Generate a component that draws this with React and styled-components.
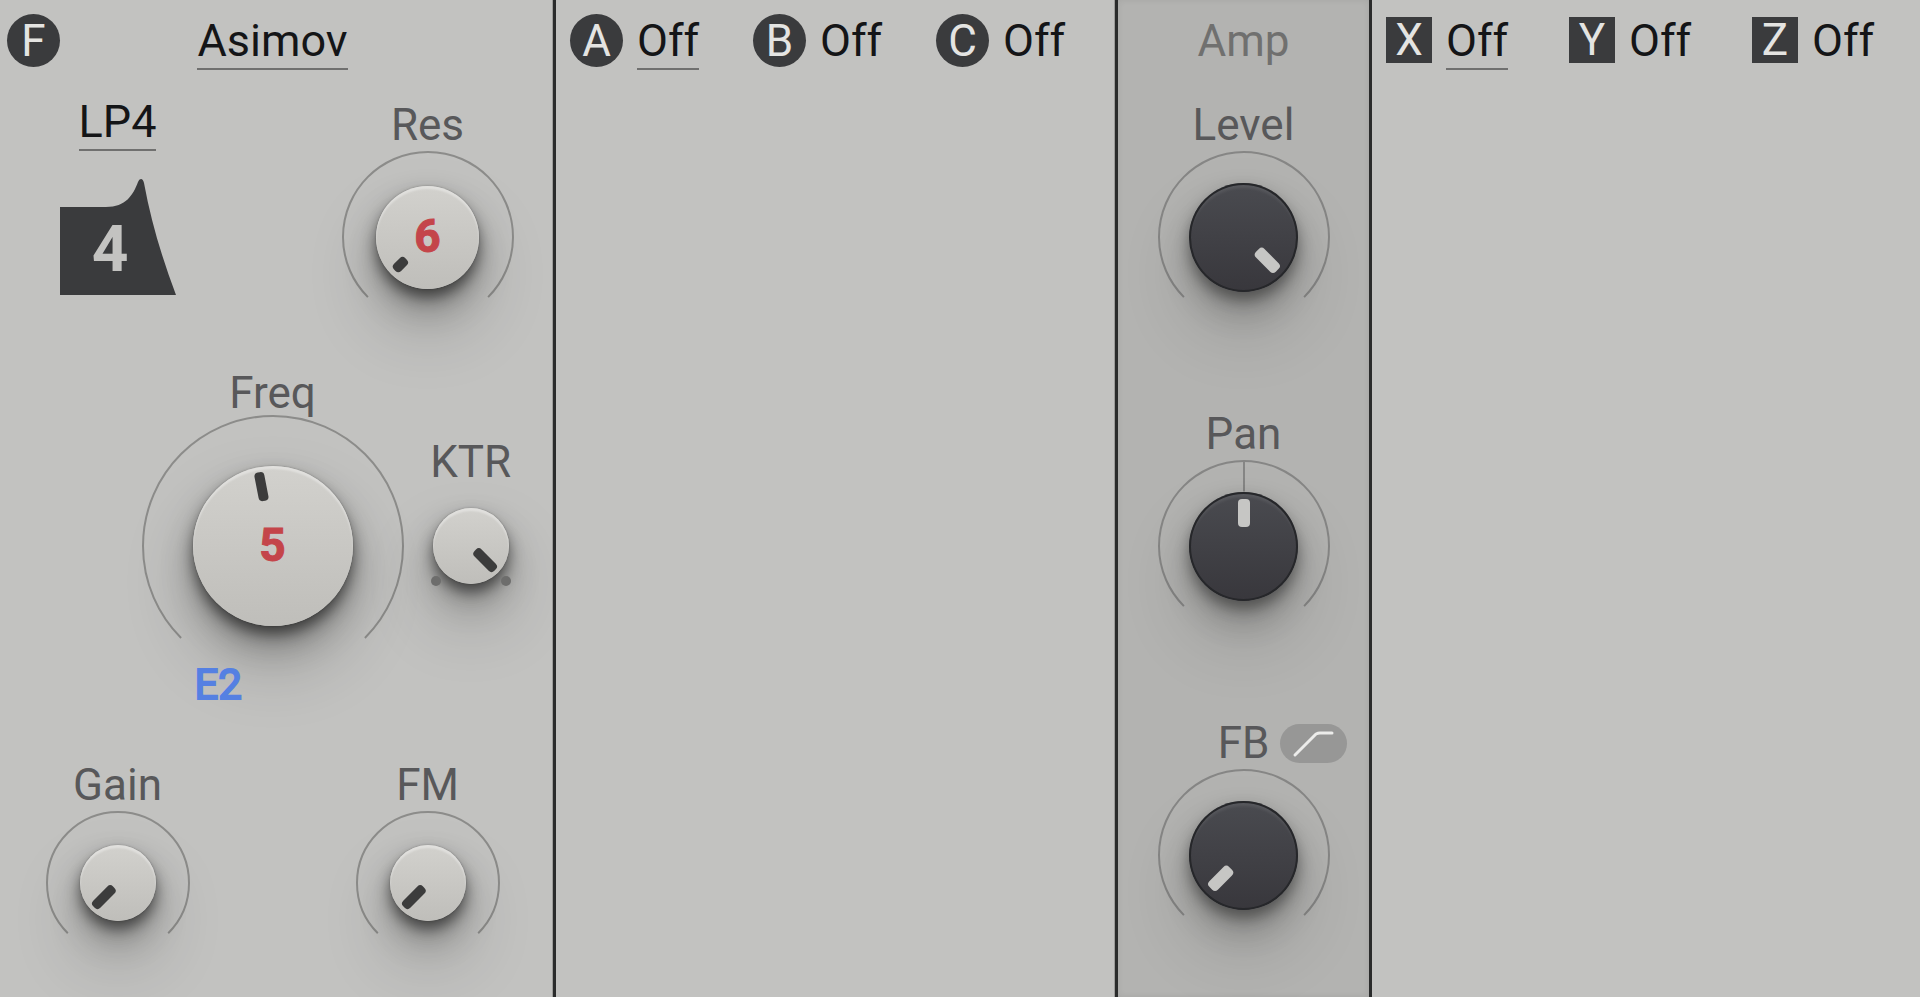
import React, { useId } from "react";
import styled, { createGlobalStyle, css } from "styled-components";

const GlobalStyle = createGlobalStyle`
  *, *::before, *::after { box-sizing: border-box; }
  html, body { margin: 0; background: #c2c2c0; }
  body {
    font-family: Roboto, "Liberation Sans", sans-serif;
    font-size: 44px;
    overflow-x: hidden;
  }
  button { font: inherit; color: inherit; background: none; border: 0; padding: 0; cursor: pointer; }
`;

const Synth = styled.main`
  display: grid;
  grid-template-columns: 556fr 562fr 254fr 548fr;
  min-height: 100vh;
  background: #c2c2c0;
  overflow: hidden;
`;

const Panel = styled.section`
  min-width: 0;
  overflow: hidden;
  padding: 14px 14px 0;
  border-right: 3px solid #2a2b2b;
  box-shadow: inset -1px 0 0 #9c9c9a;
  ${(p) =>
    p.$last &&
    css`
      border-right: 0;
      box-shadow: none;
    `}
  ${(p) => p.$filter && css`padding: 14px 15px 0 7px;`}
  ${(p) =>
    p.$amp &&
    css`
      padding: 14px 0 0;
      background: #b3b3b1;
      box-shadow: inset 0 0 6px rgba(0, 0, 0, 0.08);
    `}
`;

const FilterHeader = styled.header`
  display: grid;
  grid-template-columns: 1fr auto 1fr;
  align-items: start;
`;

const SlotBar = styled.header`
  display: flex;
`;

const Slot = styled.div`
  display: flex;
  flex: none;
  align-items: flex-start;
  gap: 14px;
  width: 183px;
`;

const Badge = styled.span`
  display: flex;
  flex: none;
  align-items: center;
  justify-content: center;
  width: 53px;
  height: 53px;
  border-radius: 50%;
  background: #3a3b3d;
  color: #e4e4e2;
  ${(p) =>
    p.$square &&
    css`
      width: 46px;
      height: 46px;
      margin-top: 3px;
      border-radius: 0;
    `}
`;

const Pick = styled.button`
  && {
    font-size: 45px;
    line-height: 54px;
    color: #141517;
    border-bottom: 2px solid ${(p) => (p.$active ? "#70706f" : "transparent")};
  }
`;

const AmpTitle = styled.h2`
  margin: 0;
  height: 56px;
  font-size: 44px;
  font-weight: 400;
  line-height: 54px;
  text-align: center;
  color: #70706f;
`;

const TopRow = styled.div`
  display: grid;
  grid-template-columns: repeat(3, minmax(0, 1fr));
  padding: 0 33px;
  margin-top: 29px;
`;

const TypePicker = styled.div`
  display: flex;
  flex-direction: column;
  align-items: center;
  gap: 27px;
  margin-top: -4px;
`;

const FreqRow = styled.div`
  display: grid;
  grid-template-columns: 1fr auto 1fr;
  margin-top: 48px;
`;

const BottomRow = styled(TopRow)`
  margin-top: 82px;
`;

const Cell = styled.div`
  display: flex;
  justify-content: center;
  grid-column: ${(p) => p.$col};
  margin-top: ${(p) => p.$drop || 0}px;
`;

const AmpKnobs = styled.div`
  display: flex;
  flex-direction: column;
  gap: 85px;
  margin-top: 29px;
`;

const KnobBox = styled.div`
  display: flex;
  flex-direction: column;
  align-items: center;
`;

const LabelRow = styled.div`
  display: grid;
  grid-template-columns: 1fr auto 1fr;
  align-items: center;
  column-gap: ${(p) => (p.$gap ? 11 : 0)}px;
  align-self: stretch;
`;

const Label = styled.label`
  grid-column: 2;
  line-height: ${(p) => (p.$tight ? 44 : 52)}px;
  color: #58585a;
`;

const Dial = styled.div`
  position: relative;
  display: grid;
  place-items: center;
  width: ${(p) => p.$size}px;
  height: ${(p) => p.$size}px;
  > * { grid-area: 1 / 1; }
`;

const Ring = styled.svg`
  display: block;
  overflow: visible;
  fill: none;
  stroke: ${(p) => (p.$dark ? "#868685" : "#8c8c8a")};
  stroke-width: 2;
`;

const Cap = styled.div`
  display: grid;
  place-items: center;
  width: ${(p) => p.$size}px;
  height: ${(p) => p.$size}px;
  border-radius: 50%;
  background: linear-gradient(#d2d1cd, #bfbeba);
  box-shadow:
    inset 0 3px 2px rgba(255, 255, 255, 0.35),
    0 0 2px rgba(0, 0, 0, 0.3),
    0 8px 14px rgba(0, 0, 0, 0.5),
    0 18px 32px rgba(0, 0, 0, 0.26),
    0 36px 70px rgba(0, 0, 0, 0.22);
  ${(p) =>
    p.$dark &&
    css`
      background: linear-gradient(#4a4b50, #38373c);
      box-shadow:
        inset 0 0 0 2px #26272a,
        inset 0 5px 3px rgba(255, 255, 255, 0.08),
        0 8px 14px rgba(0, 0, 0, 0.36),
        0 18px 32px rgba(0, 0, 0, 0.2),
        0 36px 70px rgba(0, 0, 0, 0.18);
    `}
`;

const Needle = styled.svg`
  display: block;
  overflow: visible;
  z-index: 1;
  fill: ${(p) => (p.$dark ? "#c6c6c4" : "#3c3c3c")};
`;

const Voice = styled.span`
  padding-bottom: 3px;
  font-size: 46px;
  font-weight: 700;
  line-height: 52px;
  color: #c4454a;
  -webkit-text-stroke: 1px #c4454a;
`;

const Range = styled.input`
  position: absolute;
  inset: 0;
  width: 100%;
  height: 100%;
  margin: 0;
  opacity: 0;
  cursor: grab;
  z-index: 2;
`;

const Note = styled.output`
  position: absolute;
  left: 53px;
  bottom: -34px;
  font-size: 42px;
  line-height: 52px;
  color: #5580e2;
  -webkit-text-stroke: 2px #5580e2;
`;

const Pill = styled.button`
  && {
    width: 67px;
    height: 39px;
    border-radius: 20px;
    background: #979796;
  }
  svg { display: block; }
`;

function Knob({ label, cap, size, angle, needle, dark, dots, center, tight, voice, note, extra }) {
  const id = useId();
  const c = size / 2;
  const r = c - 1;
  const d = Math.SQRT1_2 * r;
  const w = dark ? 12 : 10;
  const [from, to] = needle;
  return (
    <KnobBox>
      <LabelRow $gap={Boolean(extra)}>
        <Label htmlFor={id} $tight={tight}>{label}</Label>
        {extra}
      </LabelRow>
      <Dial $size={size}>
        <Ring width={size} height={size} $dark={dark}>
          {!dots && <path d={`M${c - d} ${c + d}A${r} ${r} 0 1 1 ${c + d} ${c + d}`} />}
          {center && <path d={`M${c} 1V${c - cap / 2}`} />}
        </Ring>
        <Cap $size={cap} $dark={dark}>{voice && <Voice>{voice}</Voice>}</Cap>
        <Needle width={size} height={size} $dark={dark}>
          <rect
            x={c - w / 2}
            y={c - to}
            width={w}
            height={to - from}
            rx="4"
            transform={`rotate(${angle} ${c} ${c})`}
          />
          {dots && (
            <g fill="#6d6d6c">
              <circle cx={c - 35} cy={c + 35} r="5" />
              <circle cx={c + 35} cy={c + 35} r="5" />
            </g>
          )}
        </Needle>
        <Range id={id} type="range" min="-135" max="135" defaultValue={Math.round(angle)} />
        {note && <Note htmlFor={id}>{note}</Note>}
      </Dial>
    </KnobBox>
  );
}

function LowpassLogo() {
  return (
    <svg width="116" height="117" viewBox="0 0 116 117" aria-hidden="true">
      <path
        fill="#3a3b3d"
        d="M0 117V29H46C66 29 73 17 78 4Q79 1 81 1Q83 1 84 5C91 43 102 80 116 117Z"
      />
      <text x="50" y="93" textAnchor="middle" fontSize="64" fontWeight="700" fill="#c3c3c1">4</text>
    </svg>
  );
}

function Slots({ names, square }) {
  return (
    <SlotBar>
      {names.map((n, i) => (
        <Slot key={n}>
          <Badge $square={square}>{n}</Badge>
          <Pick type="button" $active={i === 0}>Off</Pick>
        </Slot>
      ))}
    </SlotBar>
  );
}

export default function App() {
  return (
    <>
      <GlobalStyle />
      <Synth>
        <Panel $filter>
          <FilterHeader>
            <Badge>F</Badge>
            <Pick type="button" $active>Asimov</Pick>
          </FilterHeader>
          <TopRow>
            <TypePicker>
              <Pick type="button" $active>LP4</Pick>
              <LowpassLogo />
            </TypePicker>
            <Cell $col={3}>
              <Knob label="Res" size={172} cap={103} angle={-135} needle={[31, 47]} voice="6" />
            </Cell>
          </TopRow>
          <FreqRow>
            <Cell $col={2}>
              <Knob label="Freq" size={262} cap={160} angle={-11} needle={[46, 75]} voice="5" note="E2" tight />
            </Cell>
            <Cell $col={3} $drop={65}>
              <Knob label="KTR" size={116} cap={76} angle={135} needle={[6, 34]} dots />
            </Cell>
          </FreqRow>
          <BottomRow>
            <Cell $col={1}>
              <Knob label="Gain" size={144} cap={76} angle={-135} needle={[6, 34]} />
            </Cell>
            <Cell $col={3}>
              <Knob label="FM" size={144} cap={76} angle={-135} needle={[6, 34]} />
            </Cell>
          </BottomRow>
        </Panel>

        <Panel>
          <Slots names={["A", "B", "C"]} />
        </Panel>

        <Panel $amp>
          <AmpTitle>Amp</AmpTitle>
          <AmpKnobs>
            <Knob label="Level" size={172} cap={109} angle={135} needle={[19, 47]} dark />
            <Knob label="Pan" size={172} cap={109} angle={0} needle={[19, 47]} dark center />
            <Knob
              label="FB"
              size={172}
              cap={109}
              angle={-135}
              needle={[19, 47]}
              dark
              extra={
                <Pill type="button" aria-label="Feedback high-pass">
                  <svg width="67" height="39" fill="none" stroke="#ececea" strokeWidth="3" strokeLinecap="round" strokeLinejoin="round">
                    <path d="M15 31L36 10Q38 9 40 9H52" />
                  </svg>
                </Pill>
              }
            />
          </AmpKnobs>
        </Panel>

        <Panel $last>
          <Slots names={["X", "Y", "Z"]} square />
        </Panel>
      </Synth>
    </>
  );
}
